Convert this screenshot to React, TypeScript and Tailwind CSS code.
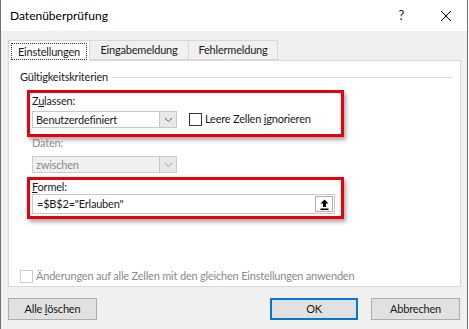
import { useState } from "react";

const font = "font-['Lato',sans-serif]";

function Chevron({ color = "#606060" }: { color?: string }) {
  return (
    <svg width="9" height="6" viewBox="0 0 9 6">
      <polyline points="1,1 4.5,4.5 8,1" fill="none" stroke={color} strokeWidth="1" />
    </svg>
  );
}

function Combo({ value, disabled }: { value: string; disabled?: boolean }) {
  return (
    <div
      className={`flex h-[17px] w-[145px] border ${
        disabled ? "border-[#cccccc] bg-[#f0f0f0] text-[#8a8a8a]" : "border-[#c8c8c8] bg-white text-[#1a1a1a]"
      }`}
    >
      <div className="flex-1 pl-[3px] leading-[15px]">{value}</div>
      <div className="flex w-[17px] items-center justify-center border-l border-[#c8c8c8] bg-[#e8e8e8]">
        <Chevron color={disabled ? "#9a9a9a" : "#606060"} />
      </div>
    </div>
  );
}

const App = () => {
  const [ignore, setIgnore] = useState(false);
  const [formula, setFormula] = useState('=$B$2="Erlauben"');

  return (
    <div className={`h-[329px] w-[469px] overflow-hidden bg-white ${font} text-[11px] tracking-[-0.2px] text-[#1a1a1a]`}>
      <div className="h-[329px] w-[468px] border-x border-[#707070] bg-[#f0f0f0]">
        {/* TITLE */}
        <div className="flex h-[31px] items-center bg-white pl-[9px]">
          <span className="flex-1 text-[12px] tracking-normal text-black">Datenüberprüfung</span>
          <span className="mr-[36px] text-[13px]">?</span>
          <svg width="12" height="12" viewBox="0 0 12 12" className="mr-[15px]">
            <path d="M1 1 L11 11 M11 1 L1 11" stroke="#000" strokeWidth="1" />
          </svg>
        </div>

        <div className="px-[7px]">
          {/* TABS */}
          <div className="relative z-10 mt-[9px] flex h-[20px] items-end">
            <div className="-mb-px flex h-[21px] w-[82px] items-start justify-center border border-b-0 border-[#d9d9d9] bg-white pt-[2px]">
              <span className="border border-dotted border-[#333] px-[6px] leading-[15px]">Einstellungen</span>
            </div>
            <div className="flex h-[20px] w-[99px] items-center justify-center border border-l-0 border-[#d9d9d9] bg-[#f0f0f0]">
              Eingabemeldung
            </div>
            <div className="flex h-[20px] w-[89px] items-center justify-center border border-l-0 border-[#d9d9d9] bg-[#f0f0f0]">
              Fehlermeldung
            </div>
          </div>

          {/* PANEL */}
          <div className="h-[227px] w-[453px] border border-[#d9d9d9] bg-white pl-[11px]">
            <div className="mt-[9px] flex items-center">
              <span className="leading-[14px]">Gültigkeitskriterien</span>
              <div className="ml-[4px] mr-[8px] h-px flex-1 bg-[#dcdcdc]" />
            </div>

            <div className="ml-[7px] mt-[6px] h-[47px] w-[317px] border-[3px] border-[#e8000b] pl-[2px] pt-[1px] shadow-[2px_3px_4px_rgba(0,0,0,0.35)]">
              <div className="leading-[14px]">
                Z<span className="underline">u</span>lassen:
              </div>
              <div className="mt-[3px] flex items-center">
                <Combo value="Benutzerdefiniert" />
                <label className="ml-[12px] flex items-center">
                  <input
                    type="checkbox"
                    checked={ignore}
                    onChange={(e) => setIgnore(e.target.checked)}
                    className="h-[13px] w-[13px] appearance-none border border-[#333] bg-white"
                  />
                  <span className="ml-[3px]">
                    Leere Zellen <span className="underline">i</span>gnorieren
                  </span>
                </label>
              </div>
            </div>

            <div className="ml-[12px] mt-[-1px] leading-[14px] text-[#8a8a8a]">Daten:</div>
            <div className="ml-[12px] mt-[6px]">
              <Combo value="zwischen" disabled />
            </div>

            <div className="ml-[7px] mt-[4px] h-[42px] w-[317px] border-[3px] border-[#e8000b] pl-[2px] shadow-[2px_3px_4px_rgba(0,0,0,0.35)]">
              <div className="leading-[14px]">
                <span className="underline">F</span>ormel:
              </div>
              <div className="mt-[0px] flex h-[20px] w-[303px] border border-[#c8c8c8] bg-white">
                <input
                  value={formula}
                  onChange={(e) => setFormula(e.target.value)}
                  className="min-w-0 flex-1 pl-[4px] text-[#1a1a1a] outline-none"
                />
                <div className="m-[1px] flex w-[18px] items-center justify-center border border-[#adadad] bg-white">
                  <svg width="9" height="11" viewBox="0 0 9 11">
                    <path d="M4.5 0.5 L8.5 4.5 L6 4.5 L6 8 L3 8 L3 4.5 L0.5 4.5 Z" fill="#000" />
                    <rect x="0.5" y="9.5" width="8" height="1.5" fill="#000" />
                  </svg>
                </div>
              </div>
            </div>

            <div className="mt-[49px] flex items-center">
              <div className="h-[13px] w-[13px] border border-[#cccccc] bg-white" />
              <span className="ml-[3px] text-[#8a8a8a]">
                Änderungen auf alle Zellen mit den gleichen Einstellungen anwenden
              </span>
            </div>
          </div>

          {/* BUTTONS */}
          <div className="mt-[11px] flex">
            <button className="h-[22px] w-[89px] border border-[#adadad] bg-[#e1e1e1]">
              Alle <span className="underline">l</span>öschen
            </button>
            <div className="flex-1" />
            <button className="h-[22px] w-[88px] border-2 border-[#0078d7] bg-[#e1e1e1]">OK</button>
            <button className="ml-[13px] h-[22px] w-[89px] border border-[#adadad] bg-[#e1e1e1]">Abbrechen</button>
          </div>
        </div>
      </div>
    </div>
  );
};

export default App;
